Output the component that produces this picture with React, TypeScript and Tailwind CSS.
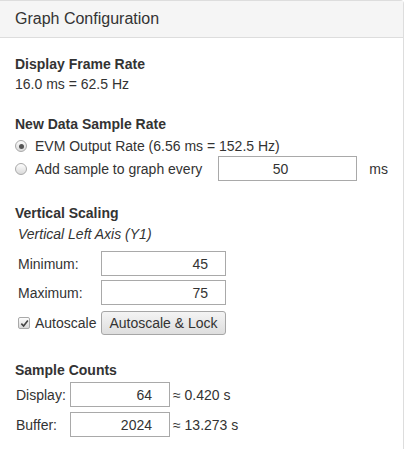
import React from 'react';

function Radio({ checked }: { checked?: boolean }) {
  return (
    <span className="flex h-[12px] w-[12px] shrink-0 items-center justify-center rounded-full border border-[#a9a9a9] bg-gradient-to-b from-[#fdfdfd] to-[#dadada]">
      {checked && <span className="h-[5px] w-[5px] rounded-full bg-[#555]" />}
    </span>
  );
}

function NumBox({ value, w, align = 'right' }: { value: string; w: string; align?: 'right' | 'center' }) {
  return (
    <div
      className={`flex h-[25px] items-center border border-[#a9a9a9] bg-white ${w} ${
        align === 'right' ? 'justify-end pr-[17px]' : 'justify-center pr-[14px]'
      }`}
    >
      {value}
    </div>
  );
}

export default function App() {
  return (
    <div className="min-h-screen w-[404px] rounded-tr-[4px] border-t border-r border-[#ddd] bg-white font-['Liberation_Sans',Arial,sans-serif] text-[14px] leading-[20px] text-[#333]">
      {/* Panel heading */}
      <div className="flex h-[37px] items-center border-b border-[#ddd] bg-[#f5f5f5] px-[15px] text-[16px]">
        Graph Configuration
      </div>

      <div className="px-[15px] pt-[16px]">
        {/* Display frame rate */}
        <div className="font-bold">Display Frame Rate</div>
        <div>16.0 ms = 62.5 Hz</div>

        {/* New data sample rate */}
        <div className="mt-[20px] font-bold">New Data Sample Rate</div>
        <div className="mt-[2px] flex h-[20px] items-center">
          <Radio checked />
          <span className="ml-[8px]">EVM Output Rate (6.56 ms = 152.5 Hz)</span>
        </div>
        <div className="flex h-[25px] items-center">
          <Radio />
          <span className="ml-[8px] w-[183px]">Add sample to graph every</span>
          <NumBox value="50" w="w-[140px]" align="center" />
          <span className="ml-[12px]">ms</span>
        </div>

        {/* Vertical scaling */}
        <div className="mt-[22px] font-bold">Vertical Scaling</div>
        <div className="mt-[1px] pl-[3px] italic">Vertical Left Axis (Y1)</div>
        <div className="mt-[7px] flex items-center">
          <span className="w-[86px] pl-[3px]">Minimum:</span>
          <NumBox value="45" w="w-[125px]" />
        </div>
        <div className="mt-[4px] flex items-center">
          <span className="w-[86px] pl-[3px]">Maximum:</span>
          <NumBox value="75" w="w-[125px]" />
        </div>
        <div className="mt-[6px] flex items-center">
          <div className="flex w-[86px] items-center pl-[3px]">
            <span className="flex h-[12px] w-[12px] items-center justify-center rounded-[2px] border border-[#a9a9a9] bg-gradient-to-b from-[#fdfdfd] to-[#d8d8d8]">
              <svg viewBox="0 0 10 10" className="h-[9px] w-[9px]">
                <path d="M1.5 5.2 L4 7.8 L8.7 1.8" fill="none" stroke="#444" strokeWidth="1.8" />
              </svg>
            </span>
            <span className="ml-[5px]">Autoscale</span>
          </div>
          <button className="h-[24px] w-[125px] rounded-[3px] border border-[#a6a6a6] bg-gradient-to-b from-[#f4f4f4] to-[#dedede] text-[14px] text-[#333]">
            Autoscale &amp; Lock
          </button>
        </div>

        {/* Sample counts */}
        <div className="mt-[25px] font-bold">Sample Counts</div>
        <div className="mt-[2px] flex items-center">
          <span className="w-[55px] pl-[1px]">Display:</span>
          <NumBox value="64" w="w-[100px]" />
          <span className="ml-[3px]">≈ 0.420 s</span>
        </div>
        <div className="mt-[5px] flex items-center">
          <span className="w-[55px] pl-[1px]">Buffer:</span>
          <NumBox value="2024" w="w-[100px]" />
          <span className="ml-[3px]">≈ 13.273 s</span>
        </div>
      </div>
    </div>
  );
}
